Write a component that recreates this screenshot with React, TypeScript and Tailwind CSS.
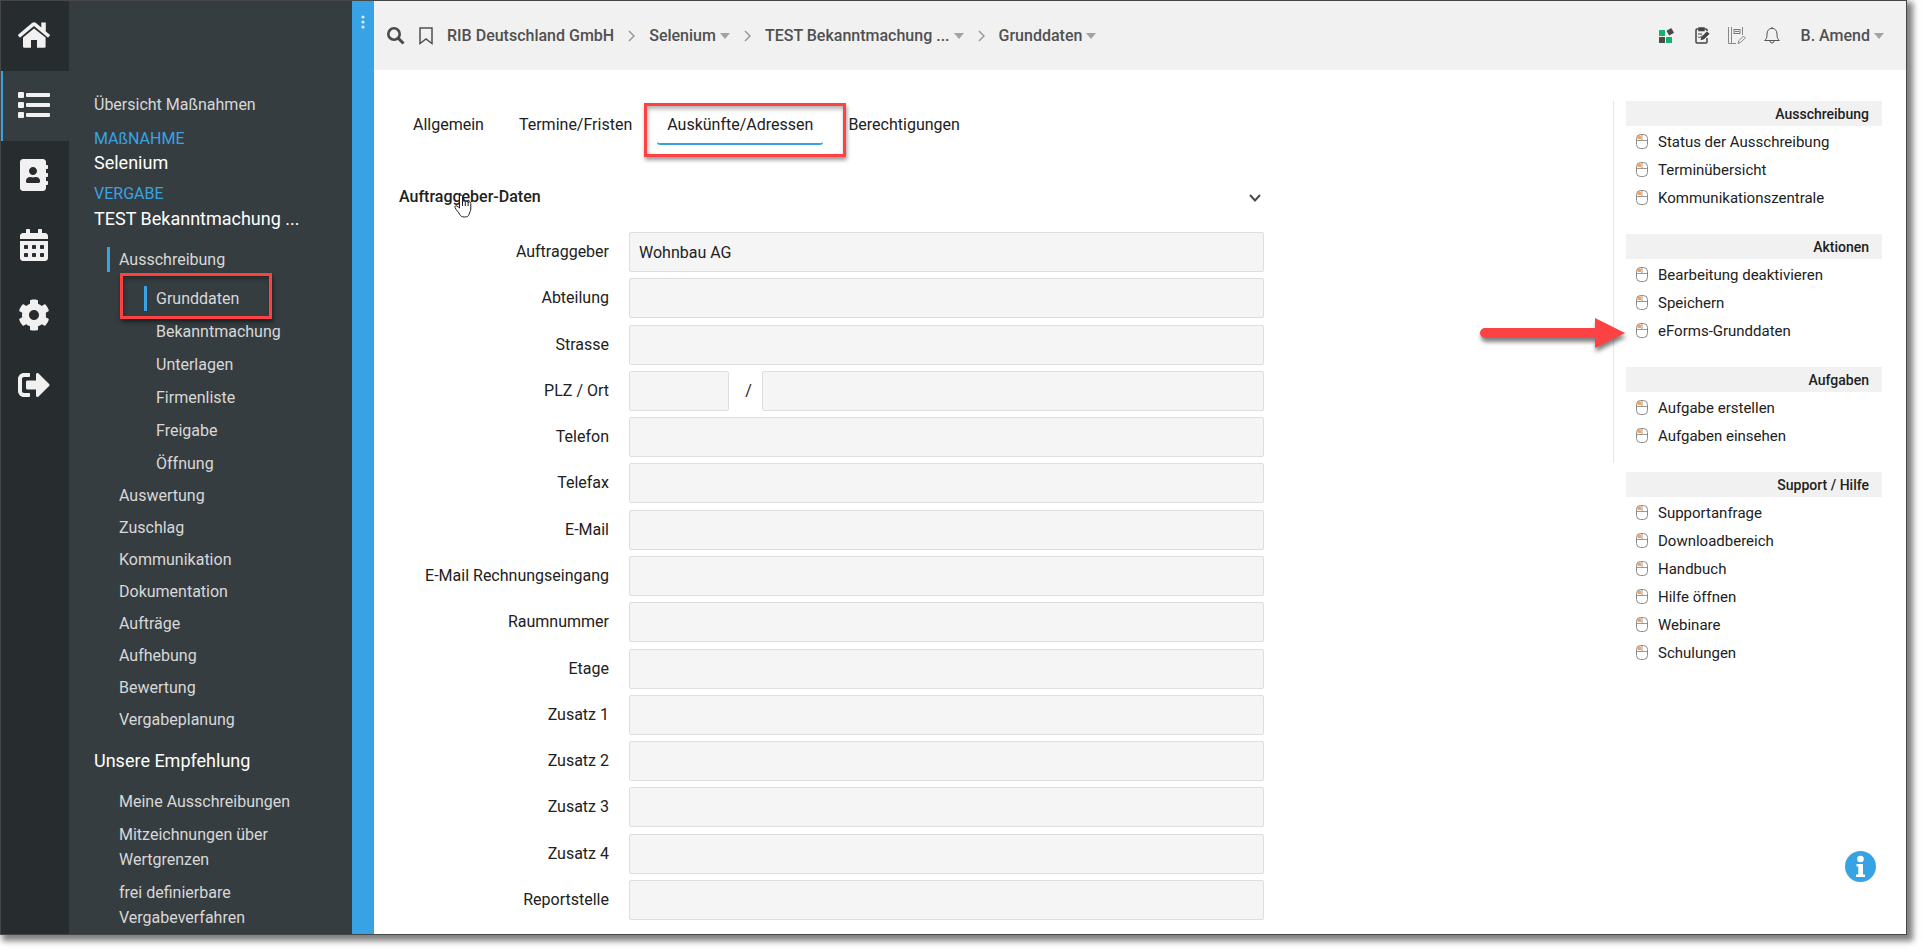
import { useState } from "react";
import {
  FaAddressBook,
  FaCalendarAlt,
  FaCog,
  FaSignOutAlt,
} from "react-icons/fa";

const RAIL = ["Startseite", "Maßnahmen", "Adressbuch", "Kalender", "Einstellungen", "Abmelden"];

const SUB_ITEMS = ["Bekanntmachung", "Unterlagen", "Firmenliste", "Freigabe", "Öffnung"];

const MAIN_ITEMS = [
  "Auswertung",
  "Zuschlag",
  "Kommunikation",
  "Dokumentation",
  "Aufträge",
  "Aufhebung",
  "Bewertung",
  "Vergabeplanung",
];

const RECOMMENDED = [
  "Meine Ausschreibungen",
  "Mitzeichnungen über Wertgrenzen",
  "frei definierbare Vergabeverfahren",
];

const CRUMBS = ["Selenium", "TEST Bekanntmachung ...", "Grunddaten"];

const TABS = ["Allgemein", "Termine/Fristen", "Auskünfte/Adressen", "Berechtigungen"];

const FIELDS = [
  "Auftraggeber",
  "Abteilung",
  "Strasse",
  "PLZ / Ort",
  "Telefon",
  "Telefax",
  "E-Mail",
  "E-Mail Rechnungseingang",
  "Raumnummer",
  "Etage",
  "Zusatz 1",
  "Zusatz 2",
  "Zusatz 3",
  "Zusatz 4",
  "Reportstelle",
];

const ACTION_GROUPS = [
  { title: "Ausschreibung", items: ["Status der Ausschreibung", "Terminübersicht", "Kommunikationszentrale"] },
  { title: "Aktionen", items: ["Bearbeitung deaktivieren", "Speichern", "eForms-Grunddaten"] },
  { title: "Aufgaben", items: ["Aufgabe erstellen", "Aufgaben einsehen"] },
];

const SUPPORT_GROUP = {
  title: "Support / Hilfe",
  items: ["Supportanfrage", "Downloadbereich", "Handbuch", "Hilfe öffnen", "Webinare", "Schulungen"],
};

function HomeIcon() {
  return (
    <svg width="32" height="26" viewBox="0 0 32 26" fill="#f1f1f1">
      <path d="M16 6.500 5 15.500V24.500a1.300 1.300 0 0 0 1.300 1.300H13V18h6v7.800h7.300a1.300 1.300 0 0 0 1.300-1.300V15.500z" />
      <path d="M31.600 12.600 27.800 9.400V.6H23.300V5.600L18 1.100a3 3 0 0 0-4 0L.4 12.600a.9.9 0 0 0-.1 1.200l1 1.300a.9.9 0 0 0 1.200.1L16 3.900l13.500 11.300a.9.9 0 0 0 1.200-.1l1-1.300a.9.9 0 0 0-.1-1.200z" />
    </svg>
  );
}

function ListIcon() {
  return (
    <svg width="32" height="28" viewBox="0 0 32 28" fill="#f1f1f1">
      {[0, 10, 20].map((y) => (
        <g key={y}>
          <rect x="0" y={y + 1} width="6" height="6" rx="1" />
          <rect x="8" y={y + 2} width="24" height="4" rx="1" />
        </g>
      ))}
    </svg>
  );
}

function MouseIcon() {
  return (
    <svg width="12" height="15" viewBox="0 0 12 15" fill="none" className="mb-[2px] shrink-0">
      <path d="M1.500 5V3a2 2 0 0 1 2-1.500H5V5z" fill="#f5a35f" />
      <path d="M.5 6.500h11M6 .5v6" stroke="#999" />
      <rect x=".5" y=".5" width="11" height="14" rx="4" stroke="#8a8a8a" />
    </svg>
  );
}

function Caret() {
  return (
    <svg width="10" height="6" viewBox="0 0 10 6" fill="#a3a3a3" className="shrink-0">
      <path d="M0 0h10L5 6z" />
    </svg>
  );
}

function Separator() {
  return (
    <svg width="7" height="12" viewBox="0 0 7 12" fill="none" stroke="#999" strokeWidth="1.500" className="shrink-0">
      <path d="M1 1l5 5-5 5" />
    </svg>
  );
}

function AppsIcon() {
  return (
    <svg width="16" height="16" viewBox="0 0 16 16">
      <rect x="0" y="2" width="6" height="6" rx=".5" fill="#10b26c" />
      <rect x="0" y="9" width="6" height="6" rx=".5" fill="#4a4a4a" />
      <rect x="7" y="9" width="6" height="6" rx=".5" fill="#10b26c" />
      <rect x="8.500" y="1" width="5.600" height="5.600" rx=".5" fill="#4a4a4a" transform="rotate(-30 11.300 3.800)" />
    </svg>
  );
}

function ClipboardIcon() {
  return (
    <svg width="15" height="17" viewBox="0 0 15 17" fill="none" stroke="#444" strokeWidth="1.500">
      <path d="M9.500 2H11a1 1 0 0 1 1 1v1M12 11v4a1 1 0 0 1-1 1H2a1 1 0 0 1-1-1V3a1 1 0 0 1 1-1h1.500" />
      <path d="M4 1h5v2.500H4z" fill="#444" />
      <path d="M3 7h4M3 9.500l1.500 1.500L7 8.500" strokeWidth="1" />
      <path d="M6 12.500 7 9.800l5-5 2 2-5 5z" fill="#444" strokeWidth="1" />
    </svg>
  );
}

function NotesIcon() {
  return (
    <svg width="18" height="18" viewBox="0 0 18 18" fill="none" stroke="#888">
      <path d="M.5 0v16.500H8M3.500 0v16.500M14.500 0v8" />
      <rect x="6" y="2.500" width="6" height="4" stroke="#777" />
      <path d="M7 4.500h4" stroke="#777" />
      <path d="M10 16.500l1-3 4.500-4.500 1.800 1.800-4.500 4.500z" />
    </svg>
  );
}

function BellIcon() {
  return (
    <svg width="16" height="17" viewBox="0 0 16 17" fill="none" stroke="#555">
      <path d="M.6 13.500c1.600-1 2.400-2.500 2.400-6.500 0-3.300 1.900-5.700 5-5.700s5 2.400 5 5.700c0 4 .8 5.500 2.400 6.500z" />
      <path d="M6 14a2 2 0 0 0 4 0M8 0v1.300" />
    </svg>
  );
}

function RailIcon({ index }: { index: number }) {
  if (index === 0) return <HomeIcon />;
  if (index === 1) return <ListIcon />;
  if (index === 2) return <FaAddressBook size={32} />;
  if (index === 3) return <FaCalendarAlt size={32} />;
  if (index === 4) return <FaCog size={32} />;
  return <FaSignOutAlt size={32} />;
}

function ActionGroup({ title, items }: { title: string; items: string[] }) {
  return (
    <section>
      <h3 className="mb-[2px] bg-[#f1f1f1] pt-px pr-[13px] text-right text-sm leading-6 font-medium">{title}</h3>
      <ul>
        {items.map((item) => (
          <li key={item}>
            <a href="#" className="flex h-7 items-center gap-[10px] pl-[10px] text-[15px]">
              <MouseIcon />
              {item}
            </a>
          </li>
        ))}
      </ul>
    </section>
  );
}

export default function App() {
  const [tab, setTab] = useState("Auskünfte/Adressen");
  const [open, setOpen] = useState(true);

  const inputClass = "h-10 min-w-0 rounded-[2px] border border-[#dedede] bg-[#f5f5f5] px-[9px] text-base";

  return (
    <div className="flex min-h-screen bg-white pr-[15px] pb-[15px] font-[Roboto,sans-serif] text-base text-[#212121]">
      <div className="relative flex flex-1 border border-[#464646] shadow-[4px_4px_6px_2px_rgba(0,0,0,0.5)]">
        {/* icon rail */}
        <nav className="w-[68px] shrink-0 bg-[#272c2e] text-[#f1f1f1]">
          {RAIL.map((label, i) => (
            <a
              key={label}
              href="#"
              aria-label={label}
              className={`flex h-[70px] items-center justify-center pb-[2px] ${
                i === 1 ? "border-l-2 border-[#38a3e4] bg-[#363d40] pr-1" : "pr-[2px]"
              }`}
            >
              <RailIcon index={i} />
            </a>
          ))}
        </nav>

        {/* navigation tree */}
        <nav className="w-[283px] shrink-0 bg-[#363d40] pt-[92px] pl-[25px] text-[#d8d8d8]">
          <a href="#" className="block leading-6">Übersicht Maßnahmen</a>
          <p className="mt-[10px] leading-6 text-[#38a3e4]">MAßNAHME</p>
          <a href="#" className="block text-lg leading-6 text-white">Selenium</a>
          <p className="mt-[7px] leading-6 text-[#38a3e4]">VERGABE</p>
          <a href="#" className="block text-lg leading-[26px] text-white">TEST Bekanntmachung ...</a>

          <ul className="mt-[15px] pl-[25px]">
            <li>
              <a href="#" className="-ml-3 block border-l-3 border-[#38a3e4] pl-[9px] leading-[25px]">Ausschreibung</a>
              <ul className="pt-[14px] pl-[37px]">
                <li className="relative pb-1">
                  <a href="#" className="-ml-3 block border-l-3 border-[#38a3e4] pl-[9px] leading-[25px]">Grunddaten</a>
                  <div className="pointer-events-none absolute -top-[13px] -left-9 h-[46px] w-[152px] border-3 border-[#fc4242] shadow-[1px_3px_4px_rgba(0,0,0,0.5),inset_1px_3px_4px_rgba(0,0,0,0.3)]" />
                </li>
                {SUB_ITEMS.map((item) => (
                  <li key={item}>
                    <a href="#" className="block leading-[33px]">{item}</a>
                  </li>
                ))}
              </ul>
            </li>
            {MAIN_ITEMS.map((item) => (
              <li key={item}>
                <a href="#" className="block leading-8">{item}</a>
              </li>
            ))}
          </ul>

          <p className="mt-[10px] text-lg leading-[30px] text-white">Unsere Empfehlung</p>
          <ul className="mt-[13px] flex w-[210px] flex-col gap-2 pl-[25px]">
            {RECOMMENDED.map((item) => (
              <li key={item}>
                <a href="#" className="block leading-[25px]">{item}</a>
              </li>
            ))}
          </ul>
        </nav>

        <button aria-label="Navigation einklappen" className="flex w-[22px] shrink-0 justify-center bg-[#38a3e4] pt-[14px]">
          <svg width="4" height="14" viewBox="0 0 4 14" fill="#d6ecfa">
            <circle cx="2" cy="2" r="1.600" />
            <circle cx="2" cy="7" r="1.600" />
            <circle cx="2" cy="12" r="1.600" />
          </svg>
        </button>

        <div className="flex min-w-0 flex-1 flex-col">
          <header className="flex h-[69px] items-center bg-[#f1f1f1] pr-[22px] pl-[13px] font-medium text-[#505050]">
            <button aria-label="Suche">
              <svg width="18" height="18" viewBox="0 0 18 18" fill="none" stroke="#4a4a4a">
                <circle cx="7" cy="7" r="5.700" strokeWidth="2.600" />
                <path d="M11 11l5.500 5.500" strokeWidth="3" />
              </svg>
            </button>
            <button aria-label="Merken" className="ml-[14px]">
              <svg width="14" height="18" viewBox="0 0 14 18" fill="none" stroke="#505050" strokeWidth="1.500">
                <path d="M1 1h12v15.500l-6-4.500-6 4.500z" />
              </svg>
            </button>
            <a href="#" className="ml-[14px]">RIB Deutschland GmbH</a>
            {CRUMBS.map((crumb) => (
              <div key={crumb} className="flex items-center">
                <span className="mx-[14px]"><Separator /></span>
                <button className="flex items-center gap-1 whitespace-nowrap">
                  {crumb}
                  <Caret />
                </button>
              </div>
            ))}
            <div className="ml-auto flex items-center gap-[18px]">
              <button aria-label="Anwendungen" className="mr-[2px]"><AppsIcon /></button>
              <button aria-label="Aufgaben"><ClipboardIcon /></button>
              <button aria-label="Notizen"><NotesIcon /></button>
              <button aria-label="Benachrichtigungen"><BellIcon /></button>
              <button className="ml-[3px] flex items-center gap-1">
                B. Amend
                <Caret />
              </button>
            </div>
          </header>

          <div className="flex flex-1 justify-between pr-6 pl-[25px]">
            <main className="flex w-[865px] flex-col pt-[37px]">
              <div role="tablist" className="flex gap-[15px] pl-1">
                {TABS.map((name) => (
                  <div key={name} className="relative">
                    <button
                      role="tab"
                      aria-selected={tab === name}
                      onClick={() => setTab(name)}
                      className={`rounded-[3px] border-b-2 px-[10px] leading-[36px] ${
                        tab === name ? "border-[#38a3e4]" : "border-transparent"
                      }`}
                    >
                      {name}
                    </button>
                    {name === "Auskünfte/Adressen" && (
                      <div className="pointer-events-none absolute -top-1 -left-[13px] h-[54px] w-[202px] border-3 border-[#fc4242] shadow-[1px_3px_4px_rgba(0,0,0,0.4),inset_1px_3px_4px_rgba(0,0,0,0.3)]" />
                    )}
                  </div>
                ))}
              </div>

              <div className="relative mt-10">
                <button
                  aria-expanded={open}
                  onClick={() => setOpen(!open)}
                  className="flex w-full items-center justify-between pr-[3px] leading-6 font-medium"
                >
                  Auftraggeber-Daten
                  <svg width="12" height="9" viewBox="0 0 12 9" fill="none" stroke="#4a4a4a" strokeWidth="2">
                    <path d="M1 2l5 5.500L11 2" />
                  </svg>
                </button>
                <svg width="18" height="24" viewBox="0 0 18 24" fill="#fff" stroke="#1b1b2b" strokeLinejoin="round" className="pointer-events-none absolute top-[9px] left-[55px]">
                  <path d="M5.500 14V2.500a1.500 1.500 0 0 1 3 0V8a1.400 1.400 0 0 1 2.800.3 1.400 1.400 0 0 1 2.800.6 1.300 1.300 0 0 1 2.700.6V15c0 2-1.300 3.500-1.800 5.500-.4 1.500-1.500 2.500-4.500 2.500s-4-1-4.700-2.500C5 18.500 2 16 1 13.500c-.4-1.200.8-2.200 2-1.500 1 .6 1.800 1.400 2.500 2zM8.500 8v4M11.300 8.300V12M14.100 9v3" />
                </svg>
              </div>

              {open && (
                <form className="mt-[23px] flex flex-1 flex-col justify-between gap-[6px] pb-[14px]">
                  {FIELDS.map((field) => (
                    <div key={field} className="flex items-center gap-5">
                      <label htmlFor={field} className="w-[210px] shrink-0 text-right">{field}</label>
                      {field === "PLZ / Ort" ? (
                        <div className="flex flex-1 items-center">
                          <input id={field} className={`${inputClass} w-[100px]`} />
                          <span className="w-[33px] pl-[6px] text-center">/</span>
                          <input aria-label="Ort" className={`${inputClass} flex-1`} />
                        </div>
                      ) : (
                        <input
                          id={field}
                          defaultValue={field === "Auftraggeber" ? "Wohnbau AG" : ""}
                          className={`${inputClass} flex-1`}
                        />
                      )}
                    </div>
                  ))}
                </form>
              )}
            </main>

            <aside className="relative flex w-[269px] shrink-0 flex-col pt-[31px]">
              <div className="flex flex-col gap-[22px] border-l border-[#e6e6e6] pb-[13px] pl-3">
                {ACTION_GROUPS.map((group) => (
                  <ActionGroup key={group.title} {...group} />
                ))}
              </div>
              <div className="mt-[9px] pl-[13px]">
                <ActionGroup {...SUPPORT_GROUP} />
              </div>

              {/* arrow pointing at eForms-Grunddaten */}
              <svg width="160" height="48" viewBox="0 0 160 48" className="pointer-events-none absolute top-[240px] -left-[140px] drop-shadow-[1px_4px_2px_rgba(0,0,0,0.5)]">
                <path d="M12 18h110V8l30 15-30 15V28H12a5 5 0 0 1 0-10z" fill="#fc4242" />
              </svg>

              <button aria-label="Information" className="mt-auto mr-[6px] mb-[52px] self-end">
                <svg width="31" height="31" viewBox="0 0 31 31">
                  <circle cx="15.500" cy="15.500" r="15.500" fill="#38a3e4" />
                  <circle cx="15.500" cy="8" r="3.300" fill="#fff" />
                  <path d="M11.500 13h6.500v10.500h2V26h-9v-2.500h2.300v-8h-1.800z" fill="#fff" />
                </svg>
              </button>
            </aside>
          </div>
        </div>
      </div>
    </div>
  );
}
